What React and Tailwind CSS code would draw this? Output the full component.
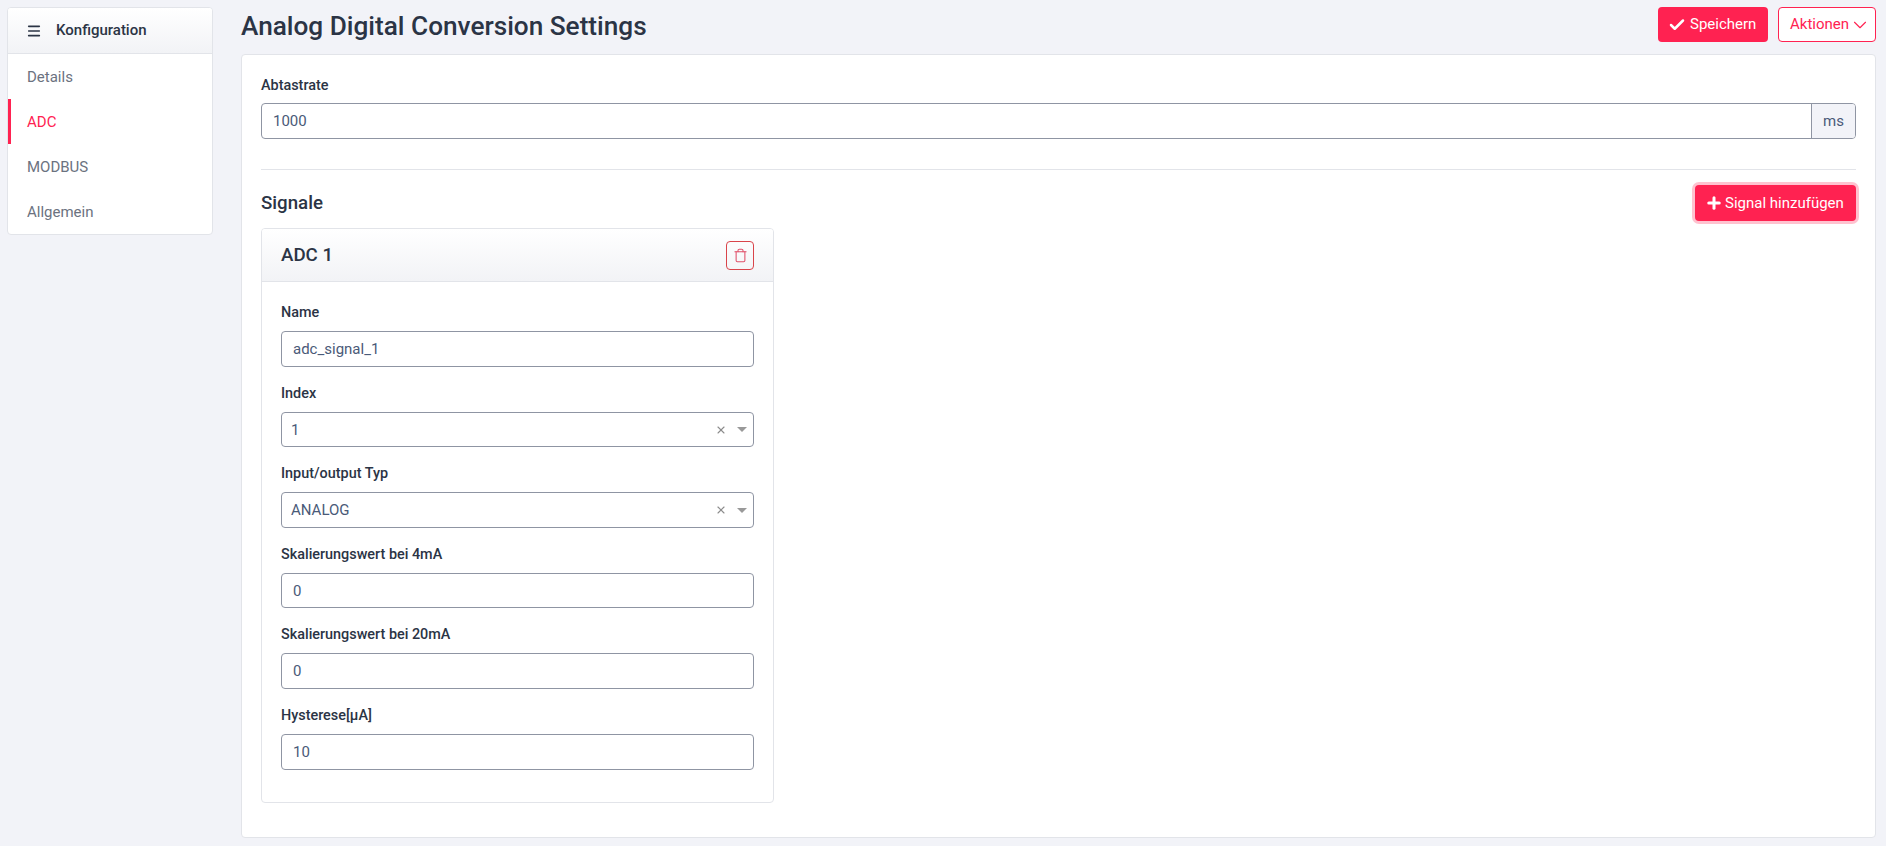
import { Check, ChevronDown, Menu, Plus, Trash, X } from "lucide-react";

const navItems = ["Details", "ADC", "MODBUS", "Allgemein"];

function Label({ children }) {
  return <div className="h-[19px] text-[14.4px] leading-[19px] font-medium text-[#2b3445]">{children}</div>;
}

function Field({ label, value, className }) {
  return (
    <div className={className}>
      <Label>{label}</Label>
      <div className="mt-[9px] flex h-[35.6px] items-center rounded border border-[#8f95a3] bg-white pl-[11px] pt-[1px] text-[15px] text-[#4a5a78]">
        {value}
      </div>
    </div>
  );
}

function SelectField({ label, value, className }) {
  return (
    <div className={className}>
      <Label>{label}</Label>
      <div className="mt-[9px] flex h-[35.6px] items-center rounded border border-[#8f95a3] bg-white pl-[9px] pr-[6px] pt-[1px] text-[15px] text-[#4a5a78]">
        <span className="flex-1">{value}</span>
        <X size={12} strokeWidth={2.2} className="mr-[10px] text-[#8c8c8c]" />
        <span className="h-0 w-0 border-x-[5px] border-t-[5px] border-x-transparent border-t-[#999999]" />
      </div>
    </div>
  );
}

export default function App() {
  return (
    <div className="flex h-[846px] w-[1886px] overflow-hidden bg-[#f2f3f8] pl-[7px] pr-[10px] pt-[7px] font-['Roboto',sans-serif]">
      <aside className="h-[228px] w-[206px] shrink-0 overflow-hidden rounded border border-[#e2e4e9] bg-white">
        <div className="flex h-[46px] items-center border-b border-[#e2e4e9] bg-gradient-to-b from-white to-[#f2f3f6] pl-[18px] text-[15px] font-medium text-[#2b3445]">
          <Menu size={16} strokeWidth={2.4} className="mr-[14px]" />
          Konfiguration
        </div>
        {navItems.map((item) => (
          <div
            key={item}
            className={
              item === "ADC"
                ? "flex h-[45px] items-center border-l-[3px] border-[#ff2251] pl-[16px] pt-[1px] text-[15px] text-[#ff2251]"
                : "flex h-[45px] items-center pl-[19px] pt-[1px] text-[15px] text-[#6b7280]"
            }
          >
            {item}
          </div>
        ))}
      </aside>

      <main className="ml-[28px] flex-1">
        <div className="flex h-[47px] items-start justify-between">
          <h1 className="text-[26.2px] leading-[38px] font-medium text-[#2b3445]">Analog Digital Conversion Settings</h1>
          <div className="flex gap-[10px]">
            <button className="flex h-[35px] w-[110px] items-center gap-[4px] rounded bg-[#ff2251] pl-[10px] text-[15px] text-white">
              <Check size={18} strokeWidth={3.3} />
              Speichern
            </button>
            <button className="flex h-[35px] w-[98px] items-center rounded border border-[#ff2251] bg-white pl-[11px] text-[15px] text-[#ff2251]">
              Aktionen
              <ChevronDown size={22} strokeWidth={1.2} />
            </button>
          </div>
        </div>

        <section className="h-[784px] rounded border border-[#e2e4e9] bg-white px-[19px] pt-[21px]">
          <Label>Abtastrate</Label>
          <div className="mt-[8px] flex h-[36px] overflow-hidden rounded border border-[#8f95a3] text-[15px]">
            <div className="flex flex-1 items-center pl-[11px] pt-[1px] text-[#4a5a78]">1000</div>
            <div className="flex w-[44px] items-center justify-center border-l border-[#8f95a3] bg-[#f2f3f8] pt-[1px] text-[#4a5a78]">ms</div>
          </div>

          <hr className="mt-[30px] border-[#e2e4e9]" />

          <div className="mt-[15px] flex items-start justify-between">
            <h2 className="mt-[6px] text-[18.7px] leading-[24px] font-medium text-[#2b3445]">Signale</h2>
            <button className="flex h-[36px] w-[161px] items-center gap-[2px] rounded bg-[#ff2251] pl-[10px] text-[15px] text-white ring-[3px] ring-[#ffc2cf]">
              <Plus size={18} strokeWidth={4} />
              Signal hinzufügen
            </button>
          </div>

          <div className="mt-[7px] h-[575px] w-[513px] overflow-hidden rounded border border-[#e2e4e9]">
            <div className="flex h-[53px] items-center justify-between border-b border-[#e2e4e9] bg-gradient-to-b from-white to-[#f2f3f6] px-[19px]">
              <span className="text-[18.7px] font-medium text-[#2b3445]">ADC 1</span>
              <button className="flex h-[29px] w-[28px] items-center justify-center rounded border border-[#d9444a] text-[#e0506a]">
                <Trash size={15} strokeWidth={1.7} />
              </button>
            </div>
            <div className="px-[19px] pt-[21px]">
              <Field label="Name" value="adc_signal_1" />
              <SelectField label="Index" value="1" className="mt-[17px]" />
              <SelectField label="Input/output Typ" value="ANALOG" className="mt-[17px]" />
              <Field label="Skalierungswert bei 4mA" value="0" className="mt-[17px]" />
              <Field label="Skalierungswert bei 20mA" value="0" className="mt-[17px]" />
              <Field label="Hysterese[µA]" value="10" className="mt-[17px]" />
            </div>
          </div>
        </section>
      </main>
    </div>
  );
}
